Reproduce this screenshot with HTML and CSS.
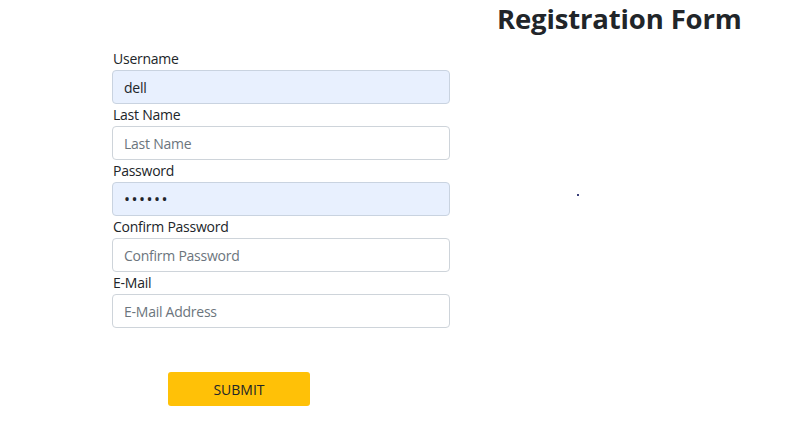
FILE: index.html
```html
<!DOCTYPE html>
<html>
<head>
<meta charset="utf-8">
<link rel="stylesheet" href="styles.css">
</head>
<body>
<div class="page">
  <h1 class="title">Registration Form</h1>
  <form class="form">
    <div class="field">
      <label class="label">Username</label>
      <input class="input filled" type="text" value="dell">
    </div>
    <div class="field">
      <label class="label">Last Name</label>
      <input class="input" type="text" placeholder="Last Name">
    </div>
    <div class="field">
      <label class="label">Password</label>
      <input class="input filled pw" type="password" value="secret">
    </div>
    <div class="field">
      <label class="label">Confirm Password</label>
      <input class="input" type="password" placeholder="Confirm Password">
    </div>
    <div class="field">
      <label class="label">E-Mail</label>
      <input class="input" type="text" placeholder="E-Mail Address">
    </div>
    <div class="actions">
      <button class="submit" type="button">SUBMIT</button>
    </div>
  </form>
  <span class="dot"></span>
</div>
</body>
</html>
```

FILE: styles.css
```css
* { box-sizing: border-box; }
html, body { margin: 0; padding: 0; background: #fff; }
body {
  font-family: "Open Sans", "Noto Sans", sans-serif;
  color: #212529;
  width: 806px;
  height: 430px;
  overflow: hidden;
}
.page { position: relative; height: 430px; }
.title {
  margin: 0 0 0 497px;
  padding-top: 2px;
  font-size: 27.5px;
  font-weight: 700;
  line-height: 34px;
  letter-spacing: -0.15px;
  color: #212529;
}
.form {
  margin: 12px 0 0 112px;
  width: 338px;
  display: flex;
  flex-direction: column;
}
.field { display: flex; flex-direction: column; }
.label {
  font-size: 14px;
  line-height: 22px;
  height: 22px;
  padding-left: 1px;
  letter-spacing: -0.25px;
  color: #212529;
}
.input {
  height: 34px;
  width: 338px;
  border: 1px solid #ced4da;
  border-radius: 4px;
  padding: 0 11px;
  font-family: inherit;
  font-size: 14px;
  letter-spacing: -0.25px;
  color: #212529;
  background: #fff;
  outline: none;
}
.input::placeholder { color: #6c757d; opacity: 1; }
.input.filled { background: #e8f0fe; border-color: #c9d3e0; }
.input.pw { font-size: 16px; letter-spacing: 1.5px; }
.actions { padding: 44px 0 0 56px; }
.submit {
  width: 142px;
  height: 34px;
  background: #ffc107;
  border: none;
  border-radius: 3px;
  font-family: inherit;
  font-size: 14px;
  color: #212529;
}
.dot {
  position: absolute;
  left: 577px;
  top: 194px;
  width: 2px;
  height: 2px;
  background: #3a3f7a;
}
```
